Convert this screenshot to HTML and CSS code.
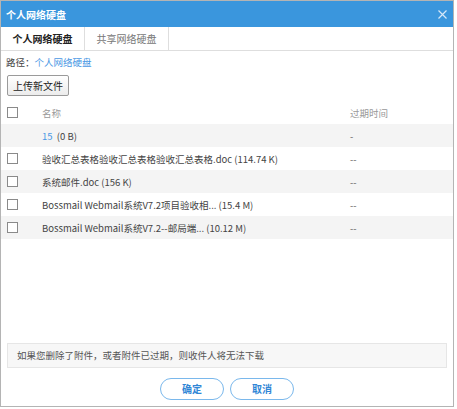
FILE: index.html
```html
<!DOCTYPE html>
<html lang="zh-CN">
<head>
    <meta charset="UTF-8">
    <title>个人网络硬盘</title>
    <link rel="stylesheet" href="styles.css">
</head>
<body>
    <div class="dialog">
        <div class="title">
            <span>个人网络硬盘</span>
            <svg class="close" width="9" height="9" viewBox="0 0 9 9"><path d="M0.5 0.5L8.5 8.5M8.5 0.5L0.5 8.5" stroke="#d6e8f8" stroke-width="1.2"/></svg>
        </div>
        <div class="tabs">
            <div class="tab active">个人网络硬盘</div>
            <div class="tab">共享网络硬盘</div>
        </div>
        <div class="content">
            <div class="path">路径：<a>个人网络硬盘</a></div>
            <button class="upload">上传新文件</button>
            <div class="list">
                <div class="row head">
                    <span class="chk"><i></i></span>
                    <span class="name">名称</span>
                    <span class="exp">过期时间</span>
                </div>
                <div class="row odd">
                    <span class="chk"></span>
                    <span class="name"><a>15</a>&nbsp;&nbsp;(0 B)</span>
                    <span class="exp">-</span>
                </div>
                <div class="row">
                    <span class="chk"><i></i></span>
                    <span class="name">验收汇总表格验收汇总表格验收汇总表格.doc (114.74 K)</span>
                    <span class="exp">--</span>
                </div>
                <div class="row odd">
                    <span class="chk"><i></i></span>
                    <span class="name">系统邮件.doc (156 K)</span>
                    <span class="exp">--</span>
                </div>
                <div class="row">
                    <span class="chk"><i></i></span>
                    <span class="name">Bossmail Webmail系统V7.2项目验收相... (15.4 M)</span>
                    <span class="exp">--</span>
                </div>
                <div class="row odd">
                    <span class="chk"><i></i></span>
                    <span class="name">Bossmail Webmail系统V7.2--邮局端... (10.12 M)</span>
                    <span class="exp">--</span>
                </div>
            </div>
        </div>
        <div class="notice">如果您删除了附件，或者附件已过期，则收件人将无法下载</div>
        <div class="footer">
            <button class="btn">确定</button>
            <button class="btn">取消</button>
        </div>
    </div>
</body>
</html>
```

FILE: styles.css
```css
body {
    margin: 0;
    background: #fff;
    font-family: "Noto Sans CJK SC", "Noto Sans", sans-serif;
    font-size: 9.5px;
    color: #444;
}
.dialog {
    width: 452px;
    height: 405px;
    border: 1px solid #b4b4b4;
    display: flex;
    flex-direction: column;
}
.title {
    height: 26px;
    background: #3a96dd;
    color: #fff;
    font-size: 10px;
    font-weight: bold;
    display: flex;
    align-items: center;
    justify-content: space-between;
    padding: 0 6px 0 5px;
}
.tabs {
    display: flex;
    height: 23px;
    border-bottom: 1px solid #dedede;
    font-size: 10px;
}
.tab {
    width: 83px;
    display: flex;
    align-items: center;
    justify-content: center;
    color: #777;
    border-right: 1px solid #dedede;
}
.tab.active {
    color: #222;
    font-weight: bold;
    background: #fff;
}
.content {
    flex: 1;
}
.path {
    padding: 3px 5px 0;
    height: 17px;
    line-height: 17px;
}
a {
    color: #4a98e4;
}
.upload {
    margin: 4px 0 0 6px;
    width: 62px;
    height: 21px;
    padding: 0;
    border: 1px solid #9a9a9a;
    border-radius: 2px;
    background: linear-gradient(#fff, #ececec);
    font-family: inherit;
    font-size: 10px;
    color: #222;
}
.list {
    margin-top: 5px;
}
.row {
    display: flex;
    align-items: center;
    height: 23px;
}
.row.odd {
    background: #f4f4f4;
}
.row.head {
    color: #999;
}
.chk {
    width: 41px;
    padding-left: 6px;
    box-sizing: border-box;
}
.chk i {
    display: block;
    width: 9px;
    height: 9px;
    border: 1px solid #8a8a8a;
    background: #fff;
}
.name {
    width: 308px;
    white-space: nowrap;
}
.exp {
    color: #666;
}
.head .exp {
    color: #999;
}
.notice {
    margin: 0 6px;
    height: 23px;
    line-height: 23px;
    padding-left: 9px;
    background: #f7f7f7;
    border: 1px solid #e6e6e6;
    color: #555;
}
.footer {
    height: 35px;
    display: flex;
    justify-content: center;
    align-items: center;
    gap: 6px;
    padding-top: 3px;
}
.btn {
    width: 64px;
    height: 22px;
    padding: 0;
    border: 1px solid #7ab8ec;
    border-radius: 11px;
    background: #fff;
    color: #2f86d6;
    font-family: inherit;
    font-size: 10px;
    font-weight: bold;
}
```
